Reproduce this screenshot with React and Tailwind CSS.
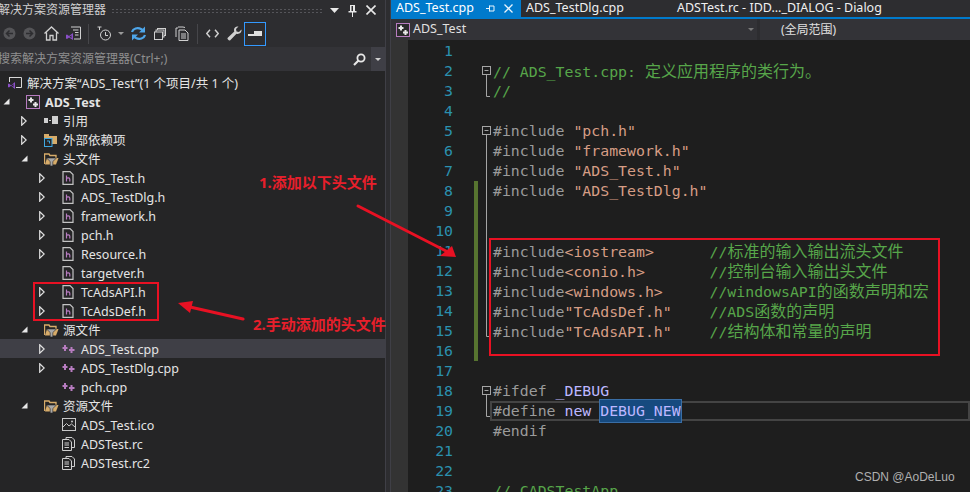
import React from "react";

const CJK = '"Noto Sans CJK SC", sans-serif';

const Arrow = ({ open }) =>
  open ? (
    <svg width="7" height="7" viewBox="0 0 7 7">
      <path d="M6.5 0.5V6.5H0.5Z" fill="#e8e8e8" />
    </svg>
  ) : (
    <svg width="6" height="10" viewBox="0 0 6 10">
      <path d="M0.7 0.8L5.2 5L0.7 9.2Z" fill="none" stroke="#e0e0e0" strokeWidth="1.2" />
    </svg>
  );

const VsMark = () => (
  <path d="M1 8.5L3 10.5L7 7V14L3 10.8L1 12.5L0 12V9Z M3.5 10.5L5.5 12V9Z" fill="#8a4fc7" fillRule="evenodd" />
);

const SolutionIcon = () => (
  <svg width="15" height="15" viewBox="0 0 15 15">
    <path d="M4 2.5H13.5V12.5H8" fill="none" stroke="#d8d8d8" />
    <path d="M1.5 3V7" stroke="#d8d8d8" />
    <path d="M1 2.5H4" stroke="#d8d8d8" />
    <VsMark />
  </svg>
);

const ProjectIcon = ({ size = 14 }) => (
  <svg width={size} height={size} viewBox="0 0 14 14">
    <rect x="0.5" y="0.5" width="13" height="13" fill="#2a2a2c" stroke="#b77cc0" />
    <path d="M5 2.5V7.5M2.5 5H7.5M9.5 7V12M7 9.5H12" stroke="#e8e8e8" strokeWidth="2" />
  </svg>
);

const RefIcon = () => (
  <svg width="14" height="14" viewBox="0 0 14 14">
    <rect x="0" y="4" width="4" height="5" fill="#d0d0d0" />
    <rect x="5" y="6" width="2" height="1" fill="#d0d0d0" />
    <rect x="8" y="2" width="6" height="8" fill="#d0d0d0" />
  </svg>
);

const ExternalIcon = () => (
  <svg width="14" height="14" viewBox="0 0 14 14">
    <path d="M0 1H5V3H13V11H0Z" fill="#d7ac6a" />
    <rect x="0.5" y="5.5" width="7.5" height="8" fill="#252526" stroke="#3fa7e0" />
    <path d="M3 8H5.5V10.5" fill="none" stroke="#3fa7e0" />
  </svg>
);

const FilterFolder = () => (
  <svg width="15" height="14" viewBox="0 0 15 14">
    <path d="M0.5 12V2H5L6 3.5H12V6" fill="none" stroke="#d7ac6a" strokeWidth="1.4" />
    <path d="M1 12.5L3 6H14.5L12 12.5Z" fill="#d7ac6a" />
    <path d="M2.5 6H12.5L8.8 9.5V14H6.2V9.5Z" fill="#a8a8a8" stroke="#252526" strokeWidth="0.6" />
  </svg>
);

const HeaderIcon = () => (
  <svg width="12" height="14" viewBox="0 0 12 14">
    <path d="M1 0.6H8L11 3.6V13.4H1Z" fill="none" stroke="#c4c4c4" strokeWidth="1.2" />
    <path d="M4.5 4.5V10.5M4.5 7.5C5.2 6.5 7.8 6.5 7.8 8.2V10.5" fill="none" stroke="#b77cc0" strokeWidth="1.2" />
  </svg>
);

const CppIcon = () => (
  <svg width="13" height="10" viewBox="0 0 13 10">
    <path d="M3 1V7M0.5 4H5.5M9.5 3V9M7 6H12.5" stroke="#b77cc0" strokeWidth="2" />
  </svg>
);

const ImageIcon = () => (
  <svg width="14" height="13" viewBox="0 0 14 13">
    <rect x="0.5" y="0.5" width="13" height="12" fill="none" stroke="#c8c8c8" />
    <path d="M1 9L4.5 5.5L7 8L9.5 6L13 9" fill="none" stroke="#c8c8c8" />
    <circle cx="10" cy="3.5" r="1" fill="#c8c8c8" />
  </svg>
);

const ResIcon = () => (
  <svg width="13" height="14" viewBox="0 0 13 14">
    <path d="M4 2V0.5H10L12.5 3V10.5H10" fill="none" stroke="#cfcfcf" />
    <path d="M0.5 2.5H7L9.5 5V13.5H0.5Z" fill="#252526" stroke="#cfcfcf" />
    <path d="M2.5 6H7M2.5 8H7M2.5 10.500H7" stroke="#cfcfcf" />
  </svg>
);

const treeRows = [
  { level: 0, icon: <SolutionIcon />, label: "解决方案“ADS_Test”(1 个项目/共 1 个)" },
  { level: 1, arrow: "open", icon: <ProjectIcon />, label: "ADS_Test", bold: true },
  { level: 2, arrow: "closed", icon: <RefIcon />, label: "引用" },
  { level: 2, arrow: "closed", icon: <ExternalIcon />, label: "外部依赖项" },
  { level: 2, arrow: "open", icon: <FilterFolder />, label: "头文件" },
  { level: 3, arrow: "closed", icon: <HeaderIcon />, label: "ADS_Test.h" },
  { level: 3, arrow: "closed", icon: <HeaderIcon />, label: "ADS_TestDlg.h" },
  { level: 3, arrow: "closed", icon: <HeaderIcon />, label: "framework.h" },
  { level: 3, arrow: "closed", icon: <HeaderIcon />, label: "pch.h" },
  { level: 3, arrow: "closed", icon: <HeaderIcon />, label: "Resource.h" },
  { level: 3, icon: <HeaderIcon />, label: "targetver.h" },
  { level: 3, arrow: "closed", icon: <HeaderIcon />, label: "TcAdsAPI.h" },
  { level: 3, arrow: "closed", icon: <HeaderIcon />, label: "TcAdsDef.h" },
  { level: 2, arrow: "open", icon: <FilterFolder />, label: "源文件" },
  { level: 3, arrow: "closed", icon: <CppIcon />, label: "ADS_Test.cpp", selected: true },
  { level: 3, arrow: "closed", icon: <CppIcon />, label: "ADS_TestDlg.cpp" },
  { level: 3, icon: <CppIcon />, label: "pch.cpp" },
  { level: 2, arrow: "open", icon: <FilterFolder />, label: "资源文件" },
  { level: 3, icon: <ImageIcon />, label: "ADS_Test.ico" },
  { level: 3, icon: <ResIcon />, label: "ADSTest.rc" },
  { level: 3, icon: <ResIcon />, label: "ADSTest.rc2" },
];

const indent = ["pl-[3px]", "pl-[3px]", "pl-[21px]", "pl-[39px]"];

const TreeRow = ({ level, arrow, icon, label, bold, selected }) => (
  <div className={`flex h-[19px] items-center ${indent[level]} ${selected ? "bg-[#3f3f46]" : ""}`}>
    {level > 0 && (
      <div className="flex w-[18px] items-center">{arrow && <Arrow open={arrow === "open"} />}</div>
    )}
    <div className="flex w-[24px] items-center justify-start pl-[5px]">{icon}</div>
    <span className={`whitespace-pre pt-[2px] text-[12.5px] leading-[15px] text-[#e4e4e4] ${bold ? "font-bold" : ""}`}>{label}</span>
  </div>
);

const ToolSlot = ({ w, children }) => (
  <div className={`flex h-full items-center justify-center ${w}`}>{children}</div>
);

const Toolbar = () => (
  <div className="flex h-[27px] items-center bg-[#2d2d30] pl-0">
    <ToolSlot w="w-[18px]">
      <svg width="13" height="13" viewBox="0 0 13 13">
        <circle cx="6.5" cy="6.500" r="6" fill="#555558" />
        <path d="M10 6.500H4M6.500 3.500L3.500 6.500L6.500 9.500" fill="none" stroke="#2d2d30" strokeWidth="1.5" />
      </svg>
    </ToolSlot>
    <ToolSlot w="w-[22px]">
      <svg width="13" height="13" viewBox="0 0 13 13">
        <circle cx="6.5" cy="6.500" r="6" fill="#555558" />
        <path d="M3 6.500H9M6.500 3.500L9.500 6.500L6.500 9.500" fill="none" stroke="#2d2d30" strokeWidth="1.5" />
      </svg>
    </ToolSlot>
    <ToolSlot w="w-[22px]">
      <svg width="15" height="15" viewBox="0 0 15 15">
        <path d="M0.5 7.500L7.500 1L14.500 7.500M2.500 6.500V14H6V9.500H9V14H12.500V6.500" fill="none" stroke="#d0d0d0" strokeWidth="1.3" />
      </svg>
    </ToolSlot>
    <ToolSlot w="w-[22px]">
      <svg width="15" height="15" viewBox="0 0 15 15">
        <path d="M5 1H14.500V13H8" fill="none" stroke="#d0d0d0" />
        <path d="M7 4H12.500M9 6.500H12.500M9 9H12.500" stroke="#d0d0d0" />
        <path d="M0 9L1 8.500L3 10L7 7V14L3 11.500L1 13L0 12.500Z M3.500 10.800L5.500 12V9.300Z" fill="#8a4fc7" fillRule="evenodd" />
      </svg>
    </ToolSlot>
    <div className="ml-[4px] h-[20px] w-px bg-[#46464a]" />
    <ToolSlot w="w-[24px] ml-[4px]">
      <svg width="16" height="16" viewBox="0 0 16 16">
        <path d="M0.5 1H4.500M2.500 1V4" stroke="#d0d0d0" />
        <circle cx="8.500" cy="9" r="5" fill="none" stroke="#d0d0d0" />
        <path d="M8.500 6V9.500H11" fill="none" stroke="#d0d0d0" />
      </svg>
    </ToolSlot>
    <ToolSlot w="w-[8px]">
      <svg width="6" height="3" viewBox="0 0 6 3">
        <path d="M0 0H6L3 3Z" fill="#9a9a9a" />
      </svg>
    </ToolSlot>
    <ToolSlot w="w-[24px] ml-[1px]">
      <svg width="15" height="15" viewBox="0 0 15 15">
        <path d="M1 6C2 2.500 6.500 1 10 3L11.500 4" fill="none" stroke="#4ea6ea" strokeWidth="2.2" />
        <path d="M14 0.500V6.500H8Z" fill="#4ea6ea" />
        <path d="M14 9C13 12.500 8.500 14 5 12L3.500 11" fill="none" stroke="#4ea6ea" strokeWidth="2.2" />
        <path d="M1 14.500V8.500H7Z" fill="#4ea6ea" />
      </svg>
    </ToolSlot>
    <ToolSlot w="w-[20px]">
      <svg width="12" height="12" viewBox="0 0 12 12">
        <rect x="3.500" y="0.500" width="8" height="7" fill="none" stroke="#d0d0d0" />
        <rect x="2" y="2" width="8" height="7" fill="#2d2d30" stroke="#d0d0d0" />
        <rect x="0.500" y="4" width="8" height="7.500" fill="#2d2d30" stroke="#d0d0d0" />
      </svg>
    </ToolSlot>
    <ToolSlot w="w-[22px] ml-[1px]">
      <svg width="14" height="15" viewBox="0 0 14 15">
        <path d="M1 11V2H3M3 1H8L10 1.500" fill="none" stroke="#d0d0d0" />
        <path d="M4 4H10L13 7V14.500H4Z" fill="#2d2d30" stroke="#d0d0d0" />
        <path d="M6 8H11M6 10H11M6 12H11" stroke="#d0d0d0" />
      </svg>
    </ToolSlot>
    <div className="ml-[4px] h-[20px] w-px bg-[#46464a]" />
    <ToolSlot w="w-[24px] ml-[2px]">
      <svg width="13" height="9" viewBox="0 0 13 9">
        <path d="M4 0.800L0.800 4.500L4 8.200M9 0.800L12.200 4.500L9 8.200" fill="none" stroke="#d0d0d0" strokeWidth="1.4" />
      </svg>
    </ToolSlot>
    <ToolSlot w="w-[20px]">
      <svg width="15" height="15" viewBox="0 0 15 15">
        <path d="M14.500 3.500L12 6L9.500 5.500L9 3L11.500 0.500C9 0 7 1.500 7 4C7 4.500 7.100 5 7.300 5.500L0.500 12C0 13 2 15 3 14.500L9.500 7.700C12 8.500 15 6.500 14.500 3.500Z" fill="#d0d0d0" />
      </svg>
    </ToolSlot>
    <div className="flex h-[24px] w-[22px] items-center justify-center border border-[#3399ff]">
      <svg width="14" height="5" viewBox="0 0 14 5">
        <rect x="0" y="3" width="14" height="2" fill="#e0e0e0" />
        <rect x="6" y="0" width="8" height="3" fill="#e0e0e0" />
      </svg>
    </div>
  </div>
);

const LeftPanel = () => (
  <div className="flex h-full w-[385px] shrink-0 flex-col bg-[#252526]">
    <div className="flex h-[20px] items-center bg-[#2d2d30]">
      <span className="-ml-[2px] whitespace-pre text-[12px] text-[#d0d0d0]">解决方案资源管理器</span>
      <div className="ml-[5px] h-[5px] w-[212px] bg-[radial-gradient(#55555a_1px,transparent_1px)] bg-[length:4px_3px]" />
      <div className="ml-[7px] flex items-center gap-[9px]">
        <svg width="9" height="5" viewBox="0 0 9 5">
          <path d="M0 0H9L4.500 5Z" fill="#e8e8e8" />
        </svg>
        <svg width="9" height="13" viewBox="0 0 9 13">
          <path d="M2 1H7V7H8.500V8.500H5V13H4V8.500H0.500V7H2Z M3.500 2V7H5V2Z" fill="#e8e8e8" fillRule="evenodd" />
        </svg>
        <svg width="10" height="10" viewBox="0 0 10 10">
          <path d="M0.500 0.500L9.500 9.500M9.500 0.500L0.500 9.500" stroke="#e8e8e8" strokeWidth="1.6" />
        </svg>
      </div>
    </div>
    <Toolbar />
    <div className="flex h-[24px] items-center bg-[#333337]">
      <span className="-ml-[2px] flex-1 whitespace-pre text-[12px] text-[#8f8f8f]">搜索解决方案资源管理器(Ctrl+;)</span>
      <svg width="13" height="13" viewBox="0 0 13 13">
        <circle cx="8" cy="5" r="3.600" fill="none" stroke="#e8e8e8" strokeWidth="1.8" />
        <path d="M5.500 7.500L1 12" stroke="#e8e8e8" strokeWidth="2.200" />
      </svg>
      <div className="ml-[5px] flex h-full w-[14px] items-center justify-center bg-[#3f3f46]">
        <svg width="6" height="3" viewBox="0 0 6 3">
          <path d="M0 0H6L3 3Z" fill="#d0d0d0" />
        </svg>
      </div>
    </div>
    <div className="pt-[2px]">
      {treeRows.map((row, i) => (
        <TreeRow key={i} {...row} />
      ))}
    </div>
  </div>
);

const inc = "text-[#9b9b9b]";
const str = "text-[#d69d85]";
const com = "text-[#57a64a]";
const mac = "text-[#bdb7ff]";
const tail = "text-[#57a64a] ml-[2px]";

const codeLines = [
  { n: 1 },
  { n: 2, fold: "box", seg: [["// ADS_Test.cpp: 定义应用程序的类行为。", com]] },
  { n: 3, fold: "end", seg: [["//", com]] },
  { n: 4 },
  { n: 5, fold: "box", seg: [["#include ", inc], ['"pch.h"', str]] },
  { n: 6, fold: "line", seg: [["#include ", inc], ['"framework.h"', str]] },
  { n: 7, fold: "line", seg: [["#include ", inc], ['"ADS_Test.h"', str]] },
  { n: 8, fold: "line", bar: true, seg: [["#include ", inc], ['"ADS_TestDlg.h"', str]] },
  { n: 9, fold: "line", bar: true },
  { n: 10, fold: "line", bar: true },
  { n: 11, fold: "line", bar: true, seg: [["#include", inc], ["<iostream>      ", str], ["//标准的输入输出流头文件", tail]] },
  { n: 12, fold: "line", bar: true, seg: [["#include", inc], ["<conio.h>       ", str], ["//控制台输入输出头文件", tail]] },
  { n: 13, fold: "line", bar: true, seg: [["#include", inc], ["<windows.h>     ", str], ["//windowsAPI的函数声明和宏", tail]] },
  { n: 14, fold: "line", bar: true, seg: [["#include", inc], ['"TcAdsDef.h"    ', str], ["//ADS函数的声明", tail]] },
  { n: 15, fold: "end", bar: true, seg: [["#include", inc], ['"TcAdsAPI.h"    ', str], ["//结构体和常量的声明", tail]] },
  { n: 16, bar: true },
  { n: 17 },
  { n: 18, fold: "box", seg: [["#ifdef ", inc], ["_DEBUG", mac]] },
  { n: 19, fold: "end", current: true, seg: [["#define ", inc], ["new ", mac], ["DEBUG_NEW", `${mac} bg-[#164a7f] outline outline-1 outline-[#3a6ea5]`]] },
  { n: 20, seg: [["#endif", inc]] },
  { n: 21 },
  { n: 22 },
  { n: 23, seg: [["// CADSTestApp", com]] },
];

// CJK in the editor falls back to a wider font than the Latin cells
const Mixed = ({ text, className }) => (
  <span className={className}>
    {text.split(/([\u3000-\u9fff]+)/).map((part, i) =>
      i % 2 ? (
        <span key={i} className="font-['Noto_Sans_CJK_SC'] text-[16px]">
          {part}
        </span>
      ) : (
        part
      )
    )}
  </span>
);

const FoldMark = ({ type }) => (
  <svg width="15" height="20" viewBox="0 0 15 20" className="shrink-0">
    {type === "box" && (
      <g stroke="#a5a5a5" fill="none">
        <rect x="4.500" y="5.500" width="8" height="8" />
        <path d="M6.500 9.500H10.500" />
        <path d="M8.500 13.500V20" />
      </g>
    )}
    {type === "line" && <path d="M8.500 0V20" stroke="#a5a5a5" />}
    {type === "end" && <path d="M8.500 0V15.500H12" fill="none" stroke="#a5a5a5" />}
  </svg>
);

const CodeLine = ({ n, fold, bar, seg, current }) => (
  <div className="flex h-[20px] items-center">
    <span className="w-[45px] text-right text-[#2b91af]">{n}</span>
    <div className="w-[21px]" />
    <div className={`h-full w-[4px] ${bar ? "bg-[#577430]" : ""}`} />
    <FoldMark type={fold} />
    {current ? (
      <div className="-ml-[3px] box-border flex h-[20px] flex-1 items-center border-2 border-[#444444] pl-[1px] whitespace-pre">
        {seg.map(([t, c], i) => (
          <Mixed key={i} text={t} className={c} />
        ))}
      </div>
    ) : (
      <div className="whitespace-pre">
        {seg && seg.map(([t, c], i) => <Mixed key={i} text={t} className={c} />)}
      </div>
    )}
  </div>
);

const Editor = () => (
  <div className="flex h-full flex-1 flex-col bg-[#1e1e1e]">
    <div className="flex h-[17px] items-center bg-[#2d2d30] text-[12.5px] text-[#f0f0f0]">
      <div className="flex h-full w-[130px] items-center bg-[#007acc] pl-[5px] text-white">
        <span className="whitespace-pre">ADS_Test.cpp</span>
        <svg width="10" height="9" viewBox="0 0 10 9" className="ml-[12px]">
          <path d="M0 4.500H3M3.500 1.500V7.500M3.500 2H8V7H3.500" fill="none" stroke="#e8f4fc" />
        </svg>
        <svg width="9" height="9" viewBox="0 0 9 9" className="ml-[8px]">
          <path d="M0.500 0.500L8.500 8.500M8.500 0.500L0.500 8.500" stroke="#e8f4fc" strokeWidth="1.300" />
        </svg>
      </div>
      <span className="ml-[5px] w-[151px] whitespace-pre">ADS_TestDlg.cpp</span>
      <span className="whitespace-pre">ADSTest.rc - IDD..._DIALOG - Dialog</span>
    </div>
    <div className="h-[2px] bg-[#007acc]" />
    <div className="flex h-[21px] gap-[3px] bg-[#2d2d30] text-[12.5px] text-[#e0e0e0]">
      <div className="flex w-[366px] items-center bg-[#333337] pl-[5px]">
        <ProjectIcon size={14} />
        <span className="ml-[3px] flex-1 whitespace-pre">ADS_Test</span>
        <svg width="6" height="3" viewBox="0 0 6 3" className="mr-[3px]">
          <path d="M0 0H6L3 3Z" fill="#7a7a7a" />
        </svg>
      </div>
      <div className="flex flex-1 items-center bg-[#333337] pl-[21px]">
        <span className="whitespace-pre text-[12px]">(全局范围)</span>
      </div>
    </div>
    <div className="flex min-h-0 flex-1">
      <div className="w-[17px] bg-[#333333]" />
      <div className="flex-1 pt-px font-['DejaVu_Sans_Mono'] text-[14.85px]">
        {codeLines.map((line) => (
          <CodeLine key={line.n} {...line} />
        ))}
      </div>
    </div>
  </div>
);

const Annotations = () => (
  <>
    <div className="absolute left-[33px] top-[282px] h-[39px] w-[126px] border-2 border-[#e81123]" />
    <div className="absolute left-[489px] top-[238px] h-[118px] w-[451px] border-2 border-[#e81123]" />
    <span className="absolute left-[259px] top-[171px] whitespace-pre text-[15px] font-bold text-[#e81f2b]">1.添加以下头文件</span>
    <span className="absolute left-[253px] top-[313px] whitespace-pre text-[15px] font-bold text-[#e81f2b]">2.手动添加的头文件</span>
    <svg width="970" height="492" viewBox="0 0 970 492" className="pointer-events-none absolute left-0 top-0">
      <path d="M358 206L446 251" stroke="#e81123" strokeWidth="3" strokeLinecap="round" />
      <path d="M456 257L440 256L452 246Z" fill="#e81123" />
      <path d="M243 319L190 307" stroke="#e81123" strokeWidth="3" strokeLinecap="round" />
      <path d="M178 303L193 301L190 313Z" fill="#e81123" />
    </svg>
    <span className="absolute left-[855px] top-[468px] whitespace-pre font-['Liberation_Sans'] text-[12px] text-[#b0b0b0]">CSDN @AoDeLuo</span>
  </>
);

export default function App() {
  return (
    <div className="relative flex h-[492px] w-[970px] overflow-hidden bg-[#2d2d30]" style={{ fontFamily: `"Noto Sans", ${CJK}` }}>
      <LeftPanel />
      <div className="w-[6px] shrink-0 border-x border-[#3f3f46] bg-[#2d2d30]" />
      <Editor />
      <Annotations />
    </div>
  );
}
